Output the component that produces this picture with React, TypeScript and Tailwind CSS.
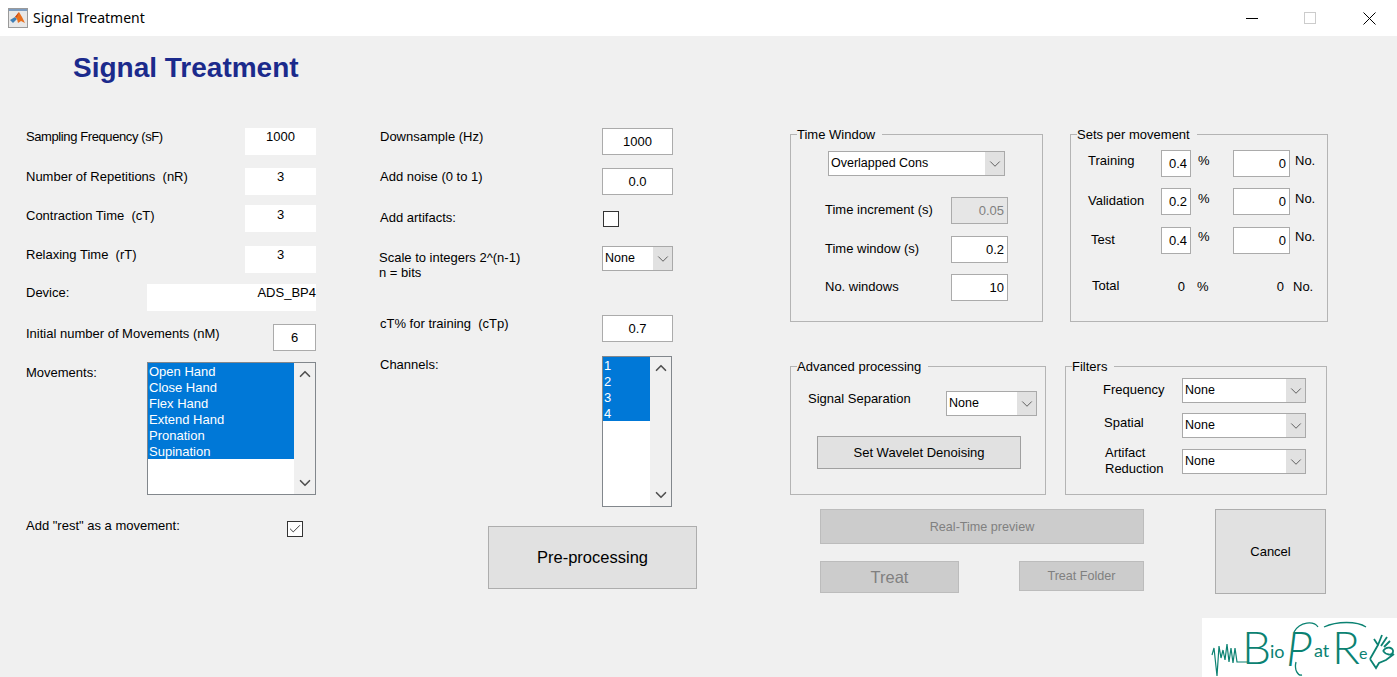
import React from "react";
import { Check, ChevronDown, ChevronUp } from "lucide-react";

const movements = ["Open Hand", "Close Hand", "Flex Hand", "Extend Hand", "Pronation", "Supination"];
const channels = ["1", "2", "3", "4"];

const setRows = [
  { label: "Training", pad: "pl-[17px]", labelTop: "mt-[2px]", pct: "0.4", gap: "mt-0", unitTop: "mt-[2px]" },
  { label: "Validation", pad: "pl-[17px]", labelTop: "mt-[4px]", pct: "0.2", gap: "mt-[11px]", unitTop: "mt-[2px]" },
  { label: "Test", pad: "pl-[20px]", labelTop: "mt-[4px]", pct: "0.4", gap: "mt-[12px]", unitTop: "mt-px" },
];

const Field = ({ value, className = "" }: { value: string; className?: string }) => (
  <input
    readOnly
    value={value}
    className={`h-[27px] border border-[#ababab] bg-white px-[3px] text-[13px] text-black outline-none ${className}`}
  />
);

const PlainField = ({ value, className = "" }: { value: string; className?: string }) => (
  <div className={`h-[27px] bg-white text-center leading-[18px] ${className}`}>{value}</div>
);

const Dropdown = ({ value, className = "" }: { value: string; className?: string }) => (
  <div className={`flex h-[25px] items-stretch border border-[#a9a9a9] bg-white ${className}`}>
    <span className="flex-1 pl-[2px] text-[12.5px] leading-[23px]">{value}</span>
    <span className="flex w-[19px] items-center justify-center bg-[#e1e1e1] text-[#444]">
      <ChevronDown size={18} strokeWidth={1.1} />
    </span>
  </div>
);

const ListBox = ({
  items,
  className = "",
  listWidth,
}: {
  items: string[];
  className?: string;
  listWidth: string;
}) => (
  <div className={`flex border border-[#82878c] bg-white ${className}`}>
    <ul className={listWidth}>
      {items.map((item) => (
        <li key={item} className="h-[16px] bg-[#0078d7] pl-px leading-[18px] text-white">
          {item}
        </li>
      ))}
    </ul>
    <div className="flex flex-1 flex-col items-center justify-between bg-[#f0f0f0] py-[2px] text-[#505050]">
      <ChevronUp size={18} strokeWidth={2.2} />
      <ChevronDown size={18} strokeWidth={2.2} />
    </div>
  </div>
);

const CheckBox = ({ checked = false }: { checked?: boolean }) => (
  <div className="flex h-[16px] w-[16px] items-center justify-center border border-[#333] bg-white text-[#333]">
    {checked && <Check size={14} strokeWidth={1.6} />}
  </div>
);

const Group = ({
  title,
  className = "",
  children,
}: {
  title: string;
  className?: string;
  children: React.ReactNode;
}) => (
  <fieldset className={`border border-[#b4b4b4] p-0 ${className}`}>
    <legend className="ml-[6px] h-[16px] pr-[7px] leading-[18px]">{title}</legend>
    {children}
  </fieldset>
);

const MatlabIcon = () => (
  <svg width="20" height="20" viewBox="0 0 20 20">
    <rect x="0.5" y="0.5" width="19" height="19" fill="#e8e8e8" stroke="#9a9a9a" />
    <rect x="1" y="1" width="18" height="2" fill="#7d9cc0" />
    <path d="M2 12 L7 9 L9 11 L5 15 Z" fill="#3f7fb5" />
    <path d="M7 9 L11 4 L14 9 L17 15 L13 13 L10 15 L9 11 Z" fill="#e8701f" />
    <path d="M11 4 L9 9 L7 9 Z" fill="#c9481a" />
  </svg>
);

const Logo = () => (
  <svg width="195" height="59" viewBox="0 0 195 59" className="block bg-white" fill="none" stroke="#0b8272">
    {/* signal trace running into the B */}
    <path
      d="M10 37 L12 30 L15 58 L17 28 L19 40 L21 32 L23 42 L25 26 L27 44 L29 30 L31 45 L33 30 L35 44 L46 44"
      strokeWidth="1.2"
    />
    <g fill="#0b8272" stroke="none" fontFamily="Lato, sans-serif">
      <text x="40" y="46" fontWeight="300" fontSize="46">
        B
      </text>
      <text x="68" y="40" fontSize="18">
        io
      </text>
      <text x="84" y="48" fontStyle="italic" fontWeight="300" fontSize="48">
        P
      </text>
      <text x="112" y="39" fontSize="18">
        at
      </text>
      <text x="130" y="46" fontWeight="300" fontSize="46">
        R
      </text>
      <text x="157" y="41" fontSize="16">
        e
      </text>
    </g>
    {/* flourishes and the hand */}
    <path d="M92 14 C98 3 112 3 116 9 M122 9 C135 3 155 3 164 9 M94 44 C92 52 96 58 100 57" strokeWidth="1.3" />
    <path
      d="M168 41 L176 27 L172 21 M176 27 L180 17 M179 28 L185 19 M182 29 L188 23 M181 33 C185 27 192 30 191 34 C190 38 184 37 181 33 M192 36 L184 42 L177 45 L174 50 L168 41"
      strokeWidth="1.8"
    />
  </svg>
);

const App = () => {
  return (
    <div className="flex h-[677px] w-[1397px] flex-col overflow-hidden bg-[#f0f0f0] font-['Liberation_Sans',Arial,sans-serif] text-[13px] text-black">
      <header className="flex h-[36px] shrink-0 items-center bg-white pl-[8px]">
        <MatlabIcon />
        <span className="-mt-[2px] ml-[5px] flex-1 font-['Noto_Sans',sans-serif] text-[14px]">Signal Treatment</span>
        <div className="flex h-full">
          <div className="flex w-[58px] items-center justify-center">
            <div className="h-px w-[12px] bg-black" />
          </div>
          <div className="mr-[2px] flex w-[58px] items-center justify-center">
            <div className="h-[12px] w-[12px] border border-[#cccccc]" />
          </div>
          <div className="flex w-[56px] items-center justify-center">
            <svg width="13" height="13" viewBox="0 0 13 13" stroke="#000" strokeWidth="1">
              <path d="M0.5 0.5 L12.5 12.5 M12.5 0.5 L0.5 12.5" />
            </svg>
          </div>
        </div>
      </header>

      <main className="flex flex-1 flex-col">
        <div className="h-[92px] shrink-0 pl-[73px] pt-[16px]">
          <h1 className="text-[28px] font-bold leading-[32px] text-[#1b2a8c]">Signal Treatment</h1>
        </div>

        <div className="flex pl-[26px]">
          {/* left column */}
          <section className="w-[290px] shrink-0">
            <div className="flex justify-between">
              <span className="leading-[18px] tracking-[-0.4px]">Sampling Frequency (sF)</span>
              <PlainField value="1000" className="w-[71px]" />
            </div>
            <div className="mt-[13px] flex justify-between">
              <span className="leading-[18px]">Number of Repetitions&nbsp; (nR)</span>
              <PlainField value="3" className="w-[71px]" />
            </div>
            <div className="mt-[10px] flex justify-between">
              <span className="mt-[2px] leading-[18px]">Contraction Time&nbsp; (cT)</span>
              <PlainField value="3" className="w-[71px] pt-[1px]" />
            </div>
            <div className="mt-[14px] flex justify-between">
              <span className="leading-[18px]">Relaxing Time&nbsp; (rT)</span>
              <PlainField value="3" className="w-[71px]" />
            </div>
            <div className="mt-[11px] flex justify-between">
              <span className="leading-[18px]">Device:</span>
              <div className="h-[27px] w-[169px] bg-white text-right leading-[18px]">ADS_BP4</div>
            </div>
            <div className="mt-[13px] flex justify-between">
              <span className="mt-px leading-[18px]">Initial number of Movements (nM)</span>
              <Field value="6" className="w-[43px] text-center" />
            </div>
            <div className="mt-[11px] flex justify-between">
              <span className="mt-[2px] leading-[18px]">Movements:</span>
              <ListBox items={movements} listWidth="w-[146px]" className="h-[133px] w-[169px]" />
            </div>
            <div className="mt-[26px] flex items-start justify-between pr-[13px]">
              <span className="-mt-[3px] leading-[16px]">Add "rest" as a movement:</span>
              <CheckBox checked />
            </div>
          </section>

          {/* middle column */}
          <section className="ml-[64px] w-[317px] shrink-0">
            <div className="flex w-[293px] justify-between">
              <span className="leading-[18px]">Downsample (Hz)</span>
              <Field value="1000" className="w-[71px] text-center" />
            </div>
            <div className="mt-[13px] flex w-[293px] justify-between">
              <span className="leading-[18px]">Add noise (0 to 1)</span>
              <Field value="0.0" className="w-[71px] text-center" />
            </div>
            <div className="mt-[16px] flex w-[239px] items-center justify-between">
              <span className="-mt-[2px] leading-[16px]">Add artifacts:</span>
              <CheckBox />
            </div>
            <div className="mt-[19px] flex w-[293px] justify-between">
              <span className="ml-[-1px] mt-[4px] leading-[15px]">
                Scale to integers 2^(n-1)
                <br />
                n = bits
              </span>
              <Dropdown value="None" className="w-[71px]" />
            </div>
            <div className="mt-[35px] flex w-[293px] justify-between">
              <span className="leading-[18px]">cT% for training&nbsp; (cTp)</span>
              <Field value="0.7" className="w-[71px] text-center" />
            </div>
            <div className="mt-[14px] flex w-[292px] justify-between">
              <span className="leading-[18px]">Channels:</span>
              <ListBox items={channels} listWidth="w-[47px]" className="h-[151px] w-[70px]" />
            </div>
            <button className="ml-[108px] mt-[19px] h-[63px] w-[209px] border border-[#adadad] bg-[#e1e1e1] text-[16.5px]">
              Pre-processing
            </button>
          </section>

          {/* right column */}
          <section className="-mt-[2px] ml-[93px] w-[538px] shrink-0">
            <div className="flex justify-between">
              <Group title="Time Window" className="h-[196px] w-[253px]">
                <Dropdown value="Overlapped Cons" className="ml-[37px] mt-[9px] w-[177px]" />
                <div className="mt-[21px] flex items-start pl-[34px]">
                  <span className="mt-[4px] w-[126px] leading-[18px]">Time increment (s)</span>
                  <div className="flex h-[27px] w-[57px] items-center justify-end border border-[#ababab] bg-[#e6e6e6] pr-[3px] text-[#808080]">
                    0.05
                  </div>
                </div>
                <div className="mt-[12px] flex items-start pl-[34px]">
                  <span className="mt-[4px] w-[126px] leading-[18px]">Time window (s)</span>
                  <Field value="0.2" className="w-[57px] text-right" />
                </div>
                <div className="mt-[11px] flex items-start pl-[34px]">
                  <span className="mt-[4px] w-[126px] leading-[18px]">No. windows</span>
                  <Field value="10" className="w-[57px] text-right" />
                </div>
              </Group>

              <Group title="Sets per movement" className="h-[196px] w-[258px]">
                <div className="pt-[8px]">
                  {setRows.map((row) => (
                    <div key={row.label} className={`flex items-start ${row.gap}`}>
                      <span className={`w-[90px] leading-[18px] ${row.pad} ${row.labelTop}`}>{row.label}</span>
                      <Field value={row.pct} className="w-[30px] text-right" />
                      <span className={`ml-[7px] w-[35px] leading-[18px] ${row.unitTop}`}>%</span>
                      <Field value="0" className="w-[57px] text-right" />
                      <span className={`ml-[5px] leading-[18px] ${row.unitTop}`}>No.</span>
                    </div>
                  ))}
                  <div className="mt-[23px] flex items-start">
                    <span className="w-[90px] pl-[21px] leading-[18px]">Total</span>
                    <span className="mt-px w-[24px] text-right leading-[18px]">0</span>
                    <span className="ml-[12px] mt-px w-[35px] leading-[18px]">%</span>
                    <span className="mt-px w-[52px] text-right leading-[18px]">0</span>
                    <span className="ml-[9px] mt-px leading-[18px]">No.</span>
                  </div>
                </div>
              </Group>
            </div>

            <div className="mt-[36px] flex">
              <Group title="Advanced processing" className="h-[137px] w-[256px]">
                <div className="flex items-start pl-[17px] pt-[17px]">
                  <span className="-mt-px w-[138px] leading-[18px]">Signal Separation</span>
                  <Dropdown value="None" className="w-[91px]" />
                </div>
                <button className="ml-[26px] mt-[20px] h-[33px] w-[204px] border border-[#a0a0a0] bg-[#e1e1e1]">
                  Set Wavelet Denoising
                </button>
              </Group>

              <Group title="Filters" className="ml-[19px] h-[137px] w-[262px]">
                <div className="flex items-start pl-[37px] pt-[4px]">
                  <span className="mt-[3px] w-[79px] leading-[18px]">Frequency</span>
                  <Dropdown value="None" className="w-[124px]" />
                </div>
                <div className="mt-[10px] flex items-start pl-[38px]">
                  <span className="mt-px w-[78px] leading-[18px]">Spatial</span>
                  <Dropdown value="None" className="w-[124px]" />
                </div>
                <div className="mt-[11px] flex items-start pl-[39px]">
                  <span className="-mt-[4px] w-[77px] leading-[16px]">
                    Artifact
                    <br />
                    Reduction
                  </span>
                  <Dropdown value="None" className="w-[124px]" />
                </div>
              </Group>
            </div>

            <div className="ml-[30px] mt-[14px] flex items-start">
              <div className="w-[324px]">
                <button className="h-[35px] w-full border border-[#bcbcbc] bg-[#cccccc] pt-px text-[12.6px] text-[#808080]">
                  Real-Time preview
                </button>
                <div className="mt-[17px] flex items-start justify-between">
                  <button className="h-[32px] w-[139px] border border-[#bcbcbc] bg-[#cccccc] pt-px text-[16.5px] text-[#808080]">
                    Treat
                  </button>
                  <button className="h-[30px] w-[125px] border border-[#bcbcbc] bg-[#cccccc] pt-px text-[12.6px] text-[#808080]">
                    Treat Folder
                  </button>
                </div>
              </div>
              <button className="ml-[71px] h-[85px] w-[111px] border border-[#adadad] bg-[#e1e1e1]">Cancel</button>
            </div>
          </section>
        </div>

        <div className="mt-auto self-end">
          <Logo />
        </div>
      </main>
    </div>
  );
};

export default App;
